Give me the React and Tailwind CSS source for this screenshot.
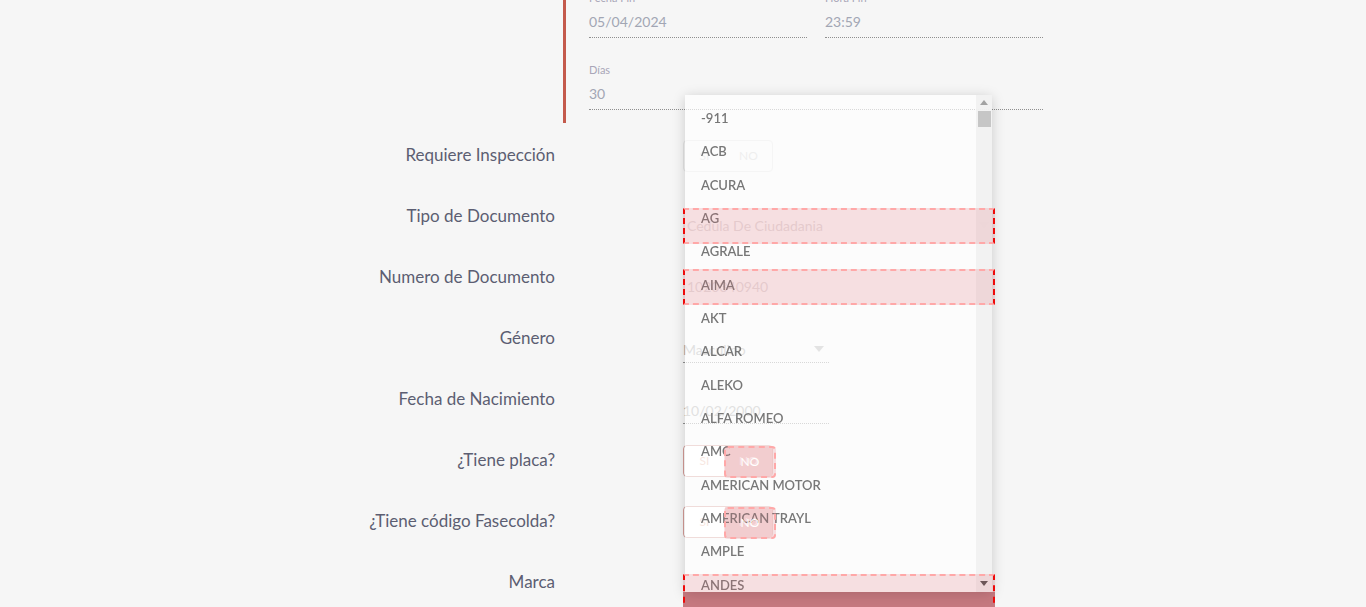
import React from "react";

const items = ["-911","ACB","ACURA","AG","AGRALE","AIMA","AKT","ALCAR","ALEKO","ALFA ROMEO","AMC","AMERICAN MOTOR","AMERICAN TRAYL","AMPLE","ANDES"];

function TopField({ label, value, w }) {
  return (
    <div className={`${w} flex flex-col`}>
      <div className="h-[16px] leading-[16px] text-[11px] text-[#a9a6b8]">{label}</div>
      <div className="mt-[4px] h-[28px] leading-[24px] text-[14px] text-[#a2a6b4] border-b border-dotted border-[#8f8f8f]">{value}</div>
    </div>
  );
}

function Row({ label, top, children }) {
  return (
    <div className="h-[61px] flex items-start">
      <div className="w-[555px] h-[61px] flex items-center justify-end text-[17px] text-[#5c5e72]">{label}</div>
      <div className={`ml-[128px] flex-1 flex items-center ${top}`}>{children}</div>
    </div>
  );
}

function Toggle({ active }) {
  return (
    <div className={`flex h-[32px] rounded-[4px] border ${active ? "border-[#d39a96]" : "border-[#e3e3e3]"} text-[12px]`}>
      <div className={`w-[41px] flex items-center justify-center ${active ? "text-[#e8b9a8] bg-white rounded-l-[4px]" : "text-[#cfcfcf]"}`}>SI</div>
      <div className={`w-[47px] flex items-center justify-center ${active ? "text-white bg-[#e9b6b6]" : "text-[#cfcfcf]"}`}>NO</div>
    </div>
  );
}

function Caret({ color = "#b0b0b0" }) {
  return (
    <svg width="10" height="6" viewBox="0 0 10 6"><path d="M0 0h10L5 6z" fill={color} /></svg>
  );
}

function Mark({ x, y, w, h, round, children }) {
  return (
    <div
      className={`absolute bg-[#e06f7a]/20 border-2 border-dashed border-[#ffa8a8] ${round ? "rounded-[4px]" : "border-x-[#ee0a0a]"} flex items-center justify-center`}
      style={{ left: x, top: y, width: w, height: h }}
    >
      {children}
    </div>
  );
}

export default function App() {
  return (
    <div className="relative w-[1366px] h-[607px] overflow-hidden bg-[#f6f6f6]" style={{ fontFamily: "Lato, 'Noto Sans', sans-serif" }}>
      <div className="ml-[563px] -mt-[10px] w-[480px] border-l-[3px] border-[#c45a4c] pl-[23px] pb-[13px] flex flex-col gap-[24px]">
        <div className="flex gap-[18px]">
          <TopField label="Fecha Fin" value="05/04/2024" w="w-[218px]" />
          <TopField label="Hora Fin" value="23:59" w="w-[218px]" />
        </div>
        <TopField label="Días" value="30" w="w-[454px]" />
      </div>

      <div className="flex flex-col mt-[1px]">
        <Row label="Requiere Inspección" top="mt-[16px]"><Toggle /></Row>
        <Row label="Tipo de Documento" top="mt-[22px]">
          <div className="w-[312px] h-[36px] flex items-center justify-between pl-[4px] pr-[6px] text-[14px] text-[#b5a9aa]">
            <span>Cedula De Ciudadania</span><Caret />
          </div>
        </Row>
        <Row label="Numero de Documento" top="mt-[22px]">
          <div className="w-[312px] h-[36px] flex items-center pl-[4px] text-[14px] text-[#b5a9aa]">1020340940</div>
        </Row>
        <Row label="Género" top="mt-[29px]">
          <div className="w-[146px] h-[27px] flex items-center justify-between pr-[5px] text-[14px] text-[#a8a8a8] border-b border-dotted border-[#8f8f8f]">
            <span>Masculino</span><Caret />
          </div>
        </Row>
        <Row label="Fecha de Nacimiento" top="mt-[29px]">
          <div className="w-[146px] h-[27px] flex items-center text-[14px] text-[#a8a8a8] border-b border-dotted border-[#8f8f8f]">10/02/2000</div>
        </Row>
        <Row label="¿Tiene placa?" top="mt-[16px]"><Toggle active /></Row>
        <Row label="¿Tiene código Fasecolda?" top="mt-[16px]"><Toggle active /></Row>
        <Row label="Marca" top="mt-[41px]">
          <div className="w-[312px] h-[24px] bg-[#bf7c82]" />
        </Row>
      </div>

      {/* dropdown overlay */}
      <div className="absolute left-[685px] top-[95px] w-[307px] h-[497px] bg-white/65 shadow-[0_2px_12px_rgba(0,0,0,0.18)] flex">
        <div className="flex-1 pt-[7px] flex flex-col">
          {items.map((t) => (
            <div key={t} className="h-[33.33px] shrink-0 flex items-center pl-[16px] text-[13px] font-semibold text-[#777777] blur-[0.3px]">{t}</div>
          ))}
        </div>
        <div className="w-[16px] bg-[#f1f1f1]/90 flex flex-col items-center">
          <div className="mt-[5px]"><svg width="8" height="5" viewBox="0 0 8 5"><path d="M0 5h8L4 0z" fill="#a3a3a3" /></svg></div>
          <div className="mt-[6px] w-[13px] h-[16px] bg-[#c6c6c6]" />
          <div className="flex-1" />
          <div className="mb-[6px]"><svg width="8" height="5" viewBox="0 0 8 5"><path d="M0 0h8L4 5z" fill="#505050" /></svg></div>
        </div>
      </div>

      <Mark x={683} y={208} w={312} h={36} />
      <Mark x={683} y={269} w={312} h={36} />
      <Mark x={724} y={446} w={52} h={32} round><span className="text-[12px] text-white">NO</span></Mark>
      <Mark x={724} y={507} w={52} h={32} round><span className="text-[12px] text-white">NO</span></Mark>
      <Mark x={683} y={574} w={312} h={40} />
    </div>
  );
}
